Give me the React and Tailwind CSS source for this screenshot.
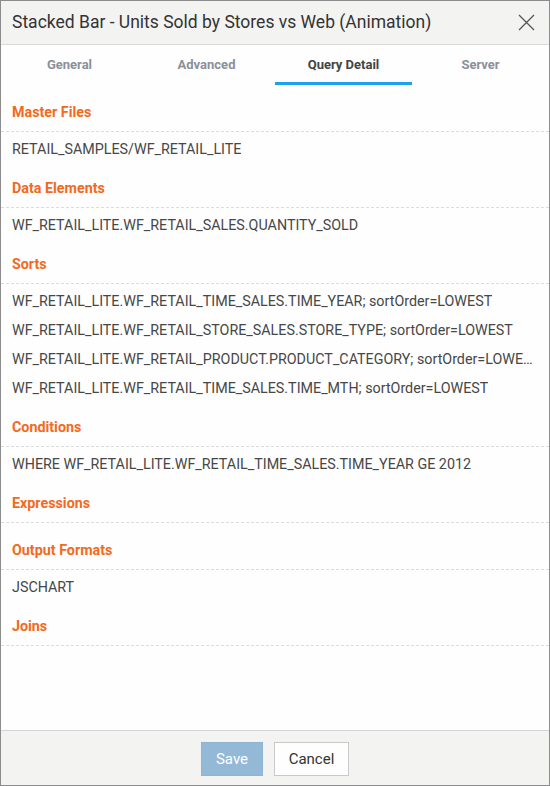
function App() {
  const tabs = ["General", "Advanced", "Query Detail", "Server"];
  const active = "Query Detail";

  const sections = [
    { title: "Master Files", items: ["RETAIL_SAMPLES/WF_RETAIL_LITE"] },
    { title: "Data Elements", items: ["WF_RETAIL_LITE.WF_RETAIL_SALES.QUANTITY_SOLD"] },
    {
      title: "Sorts",
      items: [
        "WF_RETAIL_LITE.WF_RETAIL_TIME_SALES.TIME_YEAR; sortOrder=LOWEST",
        "WF_RETAIL_LITE.WF_RETAIL_STORE_SALES.STORE_TYPE; sortOrder=LOWEST",
        "WF_RETAIL_LITE.WF_RETAIL_PRODUCT.PRODUCT_CATEGORY; sortOrder=LOWEST",
        "WF_RETAIL_LITE.WF_RETAIL_TIME_SALES.TIME_MTH; sortOrder=LOWEST",
      ],
    },
    { title: "Conditions", items: ["WHERE WF_RETAIL_LITE.WF_RETAIL_TIME_SALES.TIME_YEAR GE 2012"] },
    { title: "Expressions", items: [] },
    { title: "Output Formats", items: ["JSCHART"] },
    { title: "Joins", items: [] },
  ];

  return (
    <div className="flex h-[786px] w-[550px] flex-col border border-[#8c8c8c] bg-[#fdfefd] font-['Roboto',sans-serif]">
      {/* Header */}
      <div className="flex h-[44px] shrink-0 items-center justify-between border-b border-[#d9d9d9] bg-[#f3f4f2] pl-[11px] pr-[14px]">
        <h1 className="text-[17.5px] text-[#333]">Stacked Bar - Units Sold by Stores vs Web (Animation)</h1>
        <svg width="17" height="17" viewBox="0 0 17 17" className="text-[#555]">
          <path d="M1 1L16 16M16 1L1 16" stroke="currentColor" strokeWidth="1.3" fill="none" />
        </svg>
      </div>

      {/* Tabs */}
      <div className="grid h-[41px] shrink-0 grid-cols-4">
        {tabs.map((t) => (
          <div key={t} className="relative flex items-center justify-center pb-[1px]">
            <span
              className={
                t === active
                  ? "text-[13px] font-bold text-[#444]"
                  : "text-[13px] font-bold text-[#8b9099]"
              }
            >
              {t}
            </span>
            {t === active && (
              <div className="absolute bottom-[1px] left-0 right-0 h-[3px] bg-[#1ea0ee]" />
            )}
          </div>
        ))}
      </div>

      {/* Content */}
      <div className="flex-1 overflow-hidden pt-[9px]">
        {sections.map((s) => (
          <div key={s.title}>
            <div className="flex h-[37px] items-center border-b border-dashed border-[#dcdcdc] px-[11px]">
              <span className="text-[14.3px] font-bold text-[#f26a22]">{s.title}</span>
            </div>
            <div className="pb-[7px] pt-[3px]">
              {s.items.map((it) => (
                <div key={it} className="flex h-[29px] items-center pl-[11px] pr-[14px]">
                  <span className="truncate text-[14.3px] text-[#474747]">{it}</span>
                </div>
              ))}
            </div>
          </div>
        ))}
      </div>

      {/* Footer */}
      <div className="flex h-[55px] shrink-0 justify-center gap-[11px] border-t border-[#d4d4d4] bg-[#f3f4f2] pt-[11px]">
        <button className="h-[34px] w-[62px] border border-[#8fb4d2] bg-[#93b9d6] text-[15px] text-white">
          Save
        </button>
        <button className="h-[34px] w-[75px] border border-[#c9c9c9] bg-[#fdfefd] text-[15px] text-[#333]">
          Cancel
        </button>
      </div>
    </div>
  );
}

export default App;
